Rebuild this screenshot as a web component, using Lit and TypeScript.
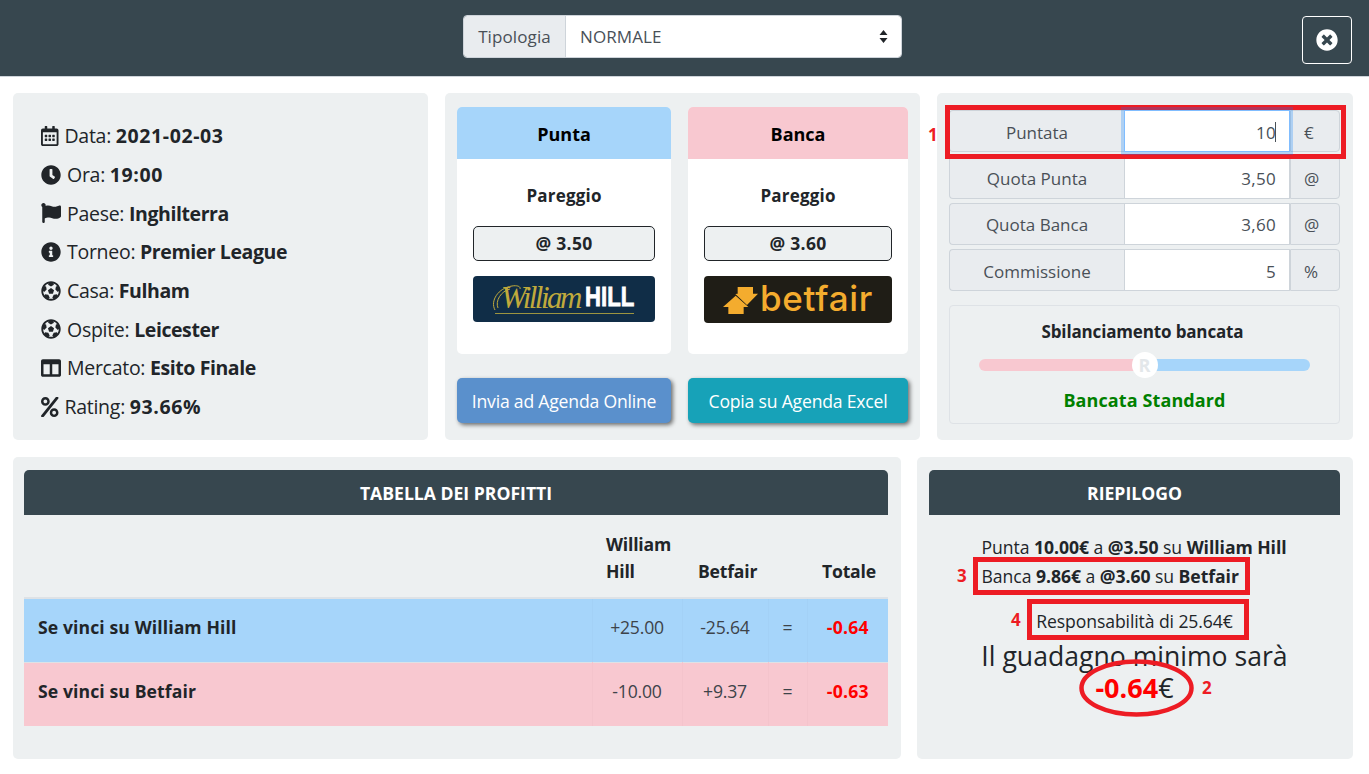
import { LitElement, html, css, svg } from "lit";
import { customElement } from "lit/decorators.js";

const ICONS: Record<string, { w: number; d: string }> = {
  calendar: { w: 448, d: "M148 288h-40c-6.6 0-12-5.4-12-12v-40c0-6.6 5.4-12 12-12h40c6.6 0 12 5.4 12 12v40c0 6.6-5.4 12-12 12zm108-12v-40c0-6.6-5.4-12-12-12h-40c-6.6 0-12 5.4-12 12v40c0 6.6 5.4 12 12 12h40c6.6 0 12-5.4 12-12zm96 0v-40c0-6.6-5.4-12-12-12h-40c-6.6 0-12 5.4-12 12v40c0 6.6 5.4 12 12 12h40c6.6 0 12-5.4 12-12zm-96 96v-40c0-6.6-5.4-12-12-12h-40c-6.6 0-12 5.4-12 12v40c0 6.6 5.4 12 12 12h40c6.6 0 12-5.4 12-12zm-96 0v-40c0-6.6-5.4-12-12-12h-40c-6.6 0-12 5.4-12 12v40c0 6.6 5.4 12 12 12h40c6.6 0 12-5.4 12-12zm192 0v-40c0-6.6-5.4-12-12-12h-40c-6.6 0-12 5.4-12 12v40c0 6.6 5.4 12 12 12h40c6.6 0 12-5.4 12-12zm96-260v352c0 26.5-21.5 48-48 48H48c-26.5 0-48-21.5-48-48V112c0-26.5 21.5-48 48-48h48V12c0-6.6 5.4-12 12-12h40c6.6 0 12 5.4 12 12v52h128V12c0-6.6 5.4-12 12-12h40c6.6 0 12 5.4 12 12v52h48c26.5 0 48 21.5 48 48zm-48 346V160H48v298c0 3.3 2.7 6 6 6h340c3.3 0 6-2.7 6-6z" },
  clock: { w: 512, d: "M256 8C119 8 8 119 8 256s111 248 248 248 248-111 248-248S393 8 256 8zm57.1 350.1L224.9 294c-3.1-2.3-4.9-5.9-4.9-9.7V116c0-6.6 5.4-12 12-12h48c6.6 0 12 5.4 12 12v137.7l63.5 46.2c5.4 3.9 6.5 11.4 2.6 16.8l-28.2 38.8c-3.9 5.3-11.4 6.5-16.8 2.6z" },
  flag: { w: 512, d: "M349.565 98.783C295.978 98.783 251.721 64 184.348 64c-24.955 0-47.309 4.384-68.045 12.013a55.947 55.947 0 0 0 3.586-23.562C118.117 24.015 94.806 1.206 66.338.048 34.345-1.254 8 24.296 8 56c0 19.026 9.497 35.825 24 45.945V488c0 13.255 10.745 24 24 24h16c13.255 0 24-10.745 24-24v-94.4c28.311-12.064 63.582-22.122 114.435-22.122 53.588 0 97.844 34.783 165.217 34.783 48.169 0 86.667-16.294 122.505-40.858C506.84 359.452 512 349.571 512 339.045v-243.1c0-23.393-24.269-38.87-45.485-29.016-34.338 15.948-76.454 31.854-116.95 31.854z" },
  info: { w: 512, d: "M256 8C119.043 8 8 119.083 8 256c0 136.997 111.043 248 248 248s248-111.003 248-248C504 119.083 392.957 8 256 8zm0 110c23.196 0 42 18.804 42 42s-18.804 42-42 42-42-18.804-42-42 18.804-42 42-42zm56 254c0 6.627-5.373 12-12 12h-88c-6.627 0-12-5.373-12-12v-24c0-6.627 5.373-12 12-12h12v-64h-12c-6.627 0-12-5.373-12-12v-24c0-6.627 5.373-12 12-12h64c6.627 0 12 5.373 12 12v100h12c6.627 0 12 5.373 12 12v24z" },
  futbol: { w: 512, d: "M504 256c0 136.967-111.033 248-248 248S8 392.967 8 256 119.033 8 256 8s248 111.033 248 248zm-48 0l-.003-.282-26.064 22.741-62.679-58.5 16.454-84.355 34.303 3.072c-24.889-34.216-60.004-60.089-100.709-73.141l13.651 31.939L256 139l-74.953-41.525 13.651-31.939c-40.631 13.028-75.78 38.87-100.709 73.141l34.565-3.073 16.192 84.355-62.678 58.5-26.064-22.741-.002.282c0 43.015 13.497 83.952 38.472 117.991l7.704-33.897 85.138 10.447 36.301 77.826-29.902 17.786c40.202 13.122 84.29 13.148 124.572 0l-29.902-17.786 36.301-77.826 85.138-10.447 7.704 33.897C442.503 339.952 456 299.015 456 256zm-248.102 69.571l-29.894-91.312L256 177.732l77.996 56.527-29.622 91.312h-96.476z" },
  columns: { w: 512, d: "M464 32H48C21.49 32 0 53.49 0 80v352c0 26.51 21.49 48 48 48h416c26.51 0 48-21.49 48-48V80c0-26.51-21.49-48-48-48zM224 416H64V160h160v256zm224 0H288V160h160v256z" },
  percent: { w: 448, d: "M112 224c61.9 0 112-50.1 112-112S173.9 0 112 0 0 50.1 0 112s50.1 112 112 112zm0-160c26.5 0 48 21.5 48 48s-21.5 48-48 48-48-21.5-48-48 21.5-48 48-48zm224 224c-61.9 0-112 50.1-112 112s50.1 112 112 112 112-50.1 112-112-50.1-112-112-112zm0 160c-26.5 0-48-21.5-48-48s21.5-48 48-48 48 21.5 48 48-21.5 48-48 48zM392.3.2l31.6.1c19.4.1 30.9 21.8 20 37.8L77.4 501.6a23.95 23.95 0 0 1-20 10.6l-33.4-.1c-19.5 0-30.9-21.9-19.7-37.9l368-463.7C377.2 4 384.5.2 392.3.2z" },
  times: { w: 512, d: "M256 8C119 8 8 119 8 256s111 248 248 248 248-111 248-248S393 8 256 8zm121.6 313.1c4.7 4.7 4.7 12.3 0 17L338 377.6c-4.7 4.7-12.3 4.7-17 0L256 312l-65.1 65.6c-4.7 4.7-12.3 4.7-17 0L134.4 338c-4.7-4.7-4.7-12.3 0-17l65.6-65-65.6-65.1c-4.7-4.7-4.7-12.3 0-17l39.6-39.6c4.7-4.7 12.3-4.7 17 0l65 65.7 65.1-65.6c4.7-4.7 12.3-4.7 17 0l39.6 39.6c4.7 4.7 4.7 12.3 0 17L312 256l65.6 65.1z" },
};

function icon(name: string) {
  const i = ICONS[name];
  return html`<svg class="ico" viewBox="0 0 ${i.w} 512" style="width:${(20 * i.w) / 512}px">${svg`<path fill="currentColor" d=${i.d}/>`}</svg>`;
}

const DETAILS = [
  ["calendar", "Data", "2021-02-03", true],
  ["clock", "Ora", "19:00", true],
  ["flag", "Paese", "Inghilterra", false],
  ["info", "Torneo", "Premier League", false],
  ["futbol", "Casa", "Fulham", false],
  ["futbol", "Ospite", "Leicester", false],
  ["columns", "Mercato", "Esito Finale", false],
  ["percent", "Rating", "93.66%", true],
];

const INPUTS = [
  ["Puntata", "10", "€", true],
  ["Quota Punta", "3,50", "@", false],
  ["Quota Banca", "3,60", "@", false],
  ["Commissione", "5", "%", false],
];

@customElement("app-root")
export class AppRoot extends LitElement {
  static styles = css`
    :host {
      display: block;
      position: relative;
      height: 774px;
      overflow: hidden;
      background: #fff;
      font-family: "Open Sans", "Noto Sans", sans-serif;
      color: #212529;
    }
    * { box-sizing: border-box; }
    b { font-weight: 700; }
    .ico { height: 20px; vertical-align: -3px; color: #212529; flex: none; }

    .top {
      height: 77px;
      background: #37474f;
      border-bottom: 1px solid #ced4da;
      padding: 15px 17px 0 463px;
      display: flex;
      align-items: flex-start;
    }
    .select { width: 439px; height: 43px; display: flex; border-radius: 4px; overflow: hidden; border: 1px solid #ced4da; font-size: 17px; letter-spacing: 0.1px; color: #495057; }
    .select .lab { width: 102px; background: #e9ecef; border-right: 1px solid #ced4da; display: flex; align-items: center; justify-content: center; }
    .select .val { flex: 1; background: #fff; display: flex; align-items: center; justify-content: space-between; padding: 0 13px 0 14px; }
    .arrows { width: 9px; height: 13px; }
    .close { margin-left: auto; margin-top: 1px; width: 50px; height: 48px; border: 1px solid #fff; border-radius: 4px; display: flex; align-items: center; justify-content: center; }
    .close .ico { color: #fff; width: 22px !important; height: 22px; vertical-align: 0; }

    .main { padding: 16px 16px 0 13px; display: flex; flex-direction: column; gap: 17px; }
    .row1 { display: grid; grid-template-columns: 415px 475px 416px; gap: 17px; height: 347px; }
    .row2 { display: grid; grid-template-columns: 888px 436px; gap: 16px; height: 302px; }
    .panel { background: #edf0f1; border-radius: 5px; }

    .details { padding: 23.5px 0 0 28px; font-size: 19.5px; letter-spacing: -0.28px; }
    .details div { height: 38.7px; display: flex; align-items: center; gap: 6px; white-space: pre; }
    .details b { letter-spacing: -0.42px; }
    .details b.dg { letter-spacing: 0.6px; }

    .odds { padding: 14px 12px 0; display: grid; grid-template-columns: 214px 220px; column-gap: 17px; grid-template-rows: 247px 45px; row-gap: 24px; }
    .card { background: #fff; border-radius: 5px; overflow: hidden; text-align: center; }
    .card .head { height: 52px; display: flex; align-items: center; justify-content: center; font-weight: 700; font-size: 18px; color: #000; padding-top: 2px; }
    .blue { background: #a6d5fa; }
    .pink { background: #f8c8d0; }
    .card .who { height: 67px; display: flex; align-items: center; justify-content: center; font-weight: 700; font-size: 17px; letter-spacing: 0.2px; padding-top: 6px; }
    .card .q { margin: 0 16px; height: 35px; border: 1px solid #212529; border-radius: 5px; background: #edf0f1; font-weight: 700; font-size: 17.5px; letter-spacing: 0.3px; display: flex; align-items: center; justify-content: center; padding-bottom: 1px; }
    .logo { margin: 15px 16px 0; height: 46px; border-radius: 4px; display: flex; align-items: center; justify-content: center; overflow: hidden; }
    .wh { background: #102d47; position: relative; justify-content: flex-start; padding-left: 23px; }
    .wh .s { font-family: "Liberation Serif", serif; font-style: italic; font-size: 31px; line-height: 1; color: #c0aa3c; letter-spacing: -2.5px; width: 89px; white-space: nowrap; margin-top: -3px; }
    .wh .h { font-family: "Liberation Sans", sans-serif; font-weight: 700; font-size: 27px; line-height: 1; color: #fff; transform: scaleX(0.82); transform-origin: left; -webkit-text-stroke: 0.8px #fff; margin-top: -3px; }
    .wh .rule { position: absolute; left: 22px; right: 21px; bottom: 8px; height: 1px; background: #9c9440; }
    .wh svg { position: absolute; left: 19px; top: 7px; width: 30px; height: 30px; }
    .bf { background: #1f1d16; height: 47px; gap: 2px; }
    .bf .n { font-family: "Inter", "Lato", sans-serif; font-weight: 500; font-size: 35px; color: #f4ac2e; letter-spacing: 0.7px; line-height: 1; margin-top: -3px; }
    .bf svg { width: 35px; height: 27px; margin-top: 2px; }
    .btn { border-radius: 5px; color: #fff; display: flex; align-items: center; justify-content: center; font-size: 17.6px; letter-spacing: -0.2px; box-shadow: 2px 2px 4px rgba(0,0,0,.55); }
    .btn.a { background: #5a90cc; }
    .btn.b { background: #17a2b8; }

    .calc { padding: 17px 13px 0 12px; }
    .ig { height: 42.3px; margin-bottom: 4px; display: grid; grid-template-columns: 175px 1fr 50px; font-size: 17px; color: #495057; }
    .ig > div { display: flex; align-items: center; border: 1px solid #ced4da; padding-top: 2px; }
    .ig .l { background: #e9ecef; justify-content: center; border-radius: 4px 0 0 4px; border-right: 0; }
    .ig .v { background: #fff; justify-content: flex-end; padding-right: 13px; position: relative; letter-spacing: 0.3px; }
    .ig .u { background: #e9ecef; border-radius: 0 4px 4px 0; border-left: 1px solid #ced4da; padding-left: 13px; }
    .ig .v.f { border-color: #80bdff; box-shadow: 0 0 0 3px rgba(0,123,255,.25); z-index: 1; }
    .caret { display: inline-block; width: 1px; height: 20px; background: #495057; margin-left: -1px; }
    .slide { margin-top: 14px; height: 119px; border: 1px solid #dee2e6; border-radius: 4px; text-align: center; padding: 15px 29px 0; }
    .slide .ti { font-weight: 700; font-size: 17px; letter-spacing: -0.15px; line-height: 22px; padding-right: 4px; }
    .track { position: relative; height: 12px; margin-top: 16px; border-radius: 6px; background: linear-gradient(to right, #f8c8d0 50%, #a6d5fa 50%); }
    .thumb { position: absolute; left: 50%; top: 50%; width: 26px; height: 26px; margin: -13px 0 0 -13px; border-radius: 50%; background: #fff; color: #e3e7ea; font-weight: 700; font-size: 18px; display: flex; align-items: center; justify-content: center; }
    .slide .std { margin-top: 15px; color: #008000; font-weight: 700; font-size: 18px; letter-spacing: 0.1px; line-height: 28px; }

    .tpanel { padding: 13px 13px 0 11px; }
    .bar { height: 45px; background: #37474f; color: #fff; border-radius: 5px 5px 0 0; display: flex; align-items: center; justify-content: center; font-weight: 700; font-size: 17.6px; }
    table { width: 100%; border-collapse: collapse; table-layout: fixed; font-size: 17.6px; }
    th { font-weight: 700; text-align: left; vertical-align: bottom; padding: 16px 6px 12px 14px; line-height: 27px; border-bottom: 2px solid #dee2e6; letter-spacing: -0.2px; }
    th.c { padding-left: 16px; }
    th.t { padding-left: 15px; }
    td { height: 64px; text-align: center; border-top: 1px solid #dee2e6; border-left: 1px solid rgba(0,0,0,.015); padding: 0 0 7px; color: #3d4349; letter-spacing: -0.2px; }
    td:first-child { text-align: left; padding-left: 14px; color: #212529; border-left: 0; letter-spacing: 0.1px; }
    td.n { color: #f00; font-weight: 700; letter-spacing: 0.2px; }
    tr.blue td { background: #a6d5fa; }
    tr.pink td { background: #f8c8d0; }

    .sum { padding: 13px 13px 0 12px; }
    .sum .bar { margin-bottom: 18px; }
    .lines { width: 306px; margin: 0 auto; font-size: 17.6px; letter-spacing: -0.05px; line-height: 29px; white-space: nowrap; }
    .resp { text-align: center; font-size: 17.6px; letter-spacing: -0.1px; margin-top: 16px; line-height: 29px; }
    .gain { text-align: center; font-size: 26.6px; line-height: 31px; margin-top: 5px; }
    .gain b { color: #f00; }
    .gain .bline { display: block; font-size: 27px; }

    .ann { position: absolute; border: 5px solid #ed1c24; pointer-events: none; }
    .num { position: absolute; color: #ed1c24; font-weight: 700; font-size: 17px; line-height: 20px; }
    .ell { position: absolute; left: 1079px; top: 659px; width: 115px; height: 58px; }
  `;

  render() {
    return html`
      <div class="top">
        <div class="select">
          <div class="lab">Tipologia</div>
          <div class="val">NORMALE
            <svg class="arrows" viewBox="0 0 9 13"><path fill="#212529" d="M4.5 0 8.5 5H.5zM4.5 13 .5 8h8z"/></svg>
          </div>
        </div>
        <div class="close">${icon("times")}</div>
      </div>

      <div class="main">
        <div class="row1">
          <div class="panel details">
            ${DETAILS.map(([ic, k, v, dg]) => html`<div>${icon(ic as string)}<span>${k}: <b class=${dg ? "dg" : ""}>${v}</b></span></div>`)}
          </div>

          <div class="panel odds">
            <div class="card">
              <div class="head blue">Punta</div>
              <div class="who">Pareggio</div>
              <div class="q">@ 3.50</div>
              <div class="logo wh">
                <svg viewBox="0 0 30 30"><path fill="none" stroke="#c0aa3c" stroke-width="1" d="M3 27C-2 18 6 5 20 3c6-1 9 1 8 3M6 25C3 18 9 8 18 6"/></svg>
                <span class="s">William</span><span class="h">HILL</span><i class="rule"></i>
              </div>
            </div>
            <div class="card">
              <div class="head pink">Banca</div>
              <div class="who">Pareggio</div>
              <div class="q">@ 3.60</div>
              <div class="logo bf">
                <svg viewBox="0 0 105 81"><path fill="#f4ac2e" d="M0 60 38 26l38 34H62v21H16V60zM44 0h46v20h15L72 54 37 21l7-1z"/></svg>
                <span class="n">betfair</span>
              </div>
            </div>
            <div class="btn a">Invia ad Agenda Online</div>
            <div class="btn b">Copia su Agenda Excel</div>
          </div>

          <div class="panel calc">
            ${INPUTS.map(([l, v, u, f]) => html`
              <div class="ig">
                <div class="l">${l}</div>
                <div class="v ${f ? "f" : ""}">${v}${f ? html`<i class="caret"></i>` : ""}</div>
                <div class="u">${u}</div>
              </div>`)}
            <div class="slide">
              <div class="ti">Sbilanciamento bancata</div>
              <div class="track"><div class="thumb">R</div></div>
              <div class="std">Bancata Standard</div>
            </div>
          </div>
        </div>

        <div class="row2">
          <div class="panel tpanel">
            <div class="bar">TABELLA DEI PROFITTI</div>
            <table>
              <colgroup><col style="width:568px"/><col style="width:90px"/><col style="width:86px"/><col style="width:39px"/><col/></colgroup>
              <thead><tr><th></th><th>William Hill</th><th class="c">Betfair</th><th></th><th class="t">Totale</th></tr></thead>
              <tbody>
                <tr class="blue"><td><b>Se vinci su William Hill</b></td><td>+25.00</td><td>-25.64</td><td>=</td><td class="n">-0.64</td></tr>
                <tr class="pink"><td><b>Se vinci su Betfair</b></td><td>-10.00</td><td>+9.37</td><td>=</td><td class="n">-0.63</td></tr>
              </tbody>
            </table>
          </div>

          <div class="panel sum">
            <div class="bar">RIEPILOGO</div>
            <div class="lines">
              <div>Punta <b>10.00€</b> a <b>@3.50</b> su <b>William Hill</b></div>
              <div>Banca <b>9.86€</b> a <b>@3.60</b> su <b>Betfair</b></div>
            </div>
            <div class="resp">Responsabilità di 25.64€</div>
            <div class="gain">Il guadagno minimo sarà<span class="bline"><b>-0.64</b>€</span></div>
          </div>
        </div>
      </div>

      <div class="ann" style="left:945px;top:105px;width:401px;height:54px"></div>
      <div class="num" style="left:928px;top:125px">1</div>
      <div class="ann" style="left:973px;top:557px;width:277px;height:38px"></div>
      <div class="num" style="left:957px;top:566px">3</div>
      <div class="ann" style="left:1027px;top:599px;width:222px;height:41px"></div>
      <div class="num" style="left:1011px;top:610px">4</div>
      <svg class="ell" viewBox="0 0 115 58"><ellipse cx="57.5" cy="29" rx="55" ry="26.5" fill="none" stroke="#ed1c24" stroke-width="4.5"/></svg>
      <div class="num" style="left:1202px;top:678px">2</div>
    `;
  }
}
